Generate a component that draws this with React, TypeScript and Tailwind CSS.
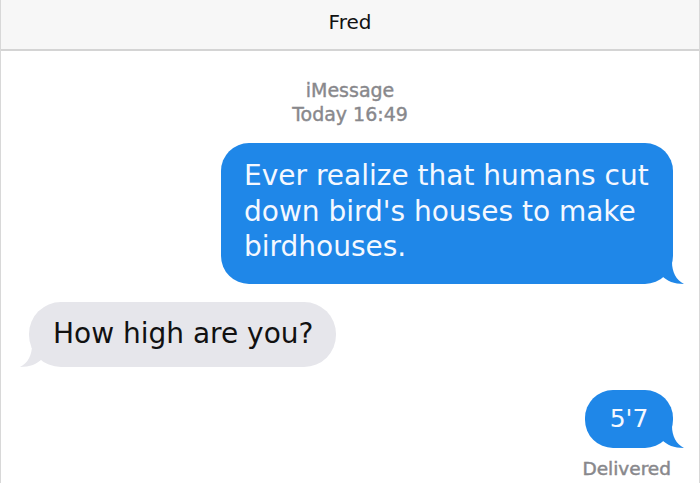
import React from 'react'

const BlueTail = () => (
  <svg
    className="absolute -right-[11px] bottom-0"
    width="22"
    height="22"
    viewBox="0 0 22 22"
  >
    <path d="M0 0 L10 0 C10 10 14 18 22 22 C12 22 5 19 0 14 Z" fill="#1f87e8" />
  </svg>
)

const GrayTail = () => (
  <svg
    className="absolute -left-[9px] bottom-0"
    width="22"
    height="22"
    viewBox="0 0 22 22"
  >
    <path d="M22 0 L12 0 C12 10 8 18 0 22 C10 22 17 19 22 14 Z" fill="#e6e6eb" />
  </svg>
)

export default function App() {
  return (
    <div className="w-[700px] h-[483px] bg-white overflow-hidden font-['DejaVu_Sans',sans-serif] border-x border-[#d8d8d8]">
      <div className="h-[51px] bg-[#f7f7f7] border-b-2 border-[#d4d4d4] flex items-center justify-center">
        <span className="text-[20px] text-[#111] -mt-[5px]">Fred</span>
      </div>

      <div className="mt-[27px] flex flex-col items-center text-[19px] leading-[24px] text-[#88888c] [-webkit-text-stroke:0.4px_#88888c]">
        <span>iMessage</span>
        <span>Today 16:49</span>
      </div>

      <div className="mt-[17px] flex justify-end pr-[26px]">
        <div className="relative w-[452px] rounded-[28px] bg-[#1f87e8] pl-[23px] pr-3 pt-[15px] pb-[19px] text-[28px] leading-[35.5px] text-[#f4f8ff]">
          Ever realize that humans cut down bird's houses to make birdhouses.
          <BlueTail />
        </div>
      </div>

      <div className="mt-[18px] flex justify-start pl-[28px]">
        <div className="relative rounded-[32px] bg-[#e6e6eb] pl-[24px] pr-[23px] pt-[14px] pb-[15px] text-[28px] leading-[36px] text-[#111]">
          How high are you?
          <GrayTail />
        </div>
      </div>

      <div className="mt-[23px] flex flex-col items-end pr-[26px]">
        <div className="relative w-[88px] h-[58px] rounded-[28px] bg-[#1f87e8] flex items-center justify-center text-[25px] text-[#f4f8ff]">
          5'7
          <BlueTail />
        </div>
        <span className="mt-[10px] mr-[2px] text-[18.5px] leading-[22px] text-[#88888c] [-webkit-text-stroke:0.5px_#88888c]">
          Delivered
        </span>
      </div>
    </div>
  )
}
